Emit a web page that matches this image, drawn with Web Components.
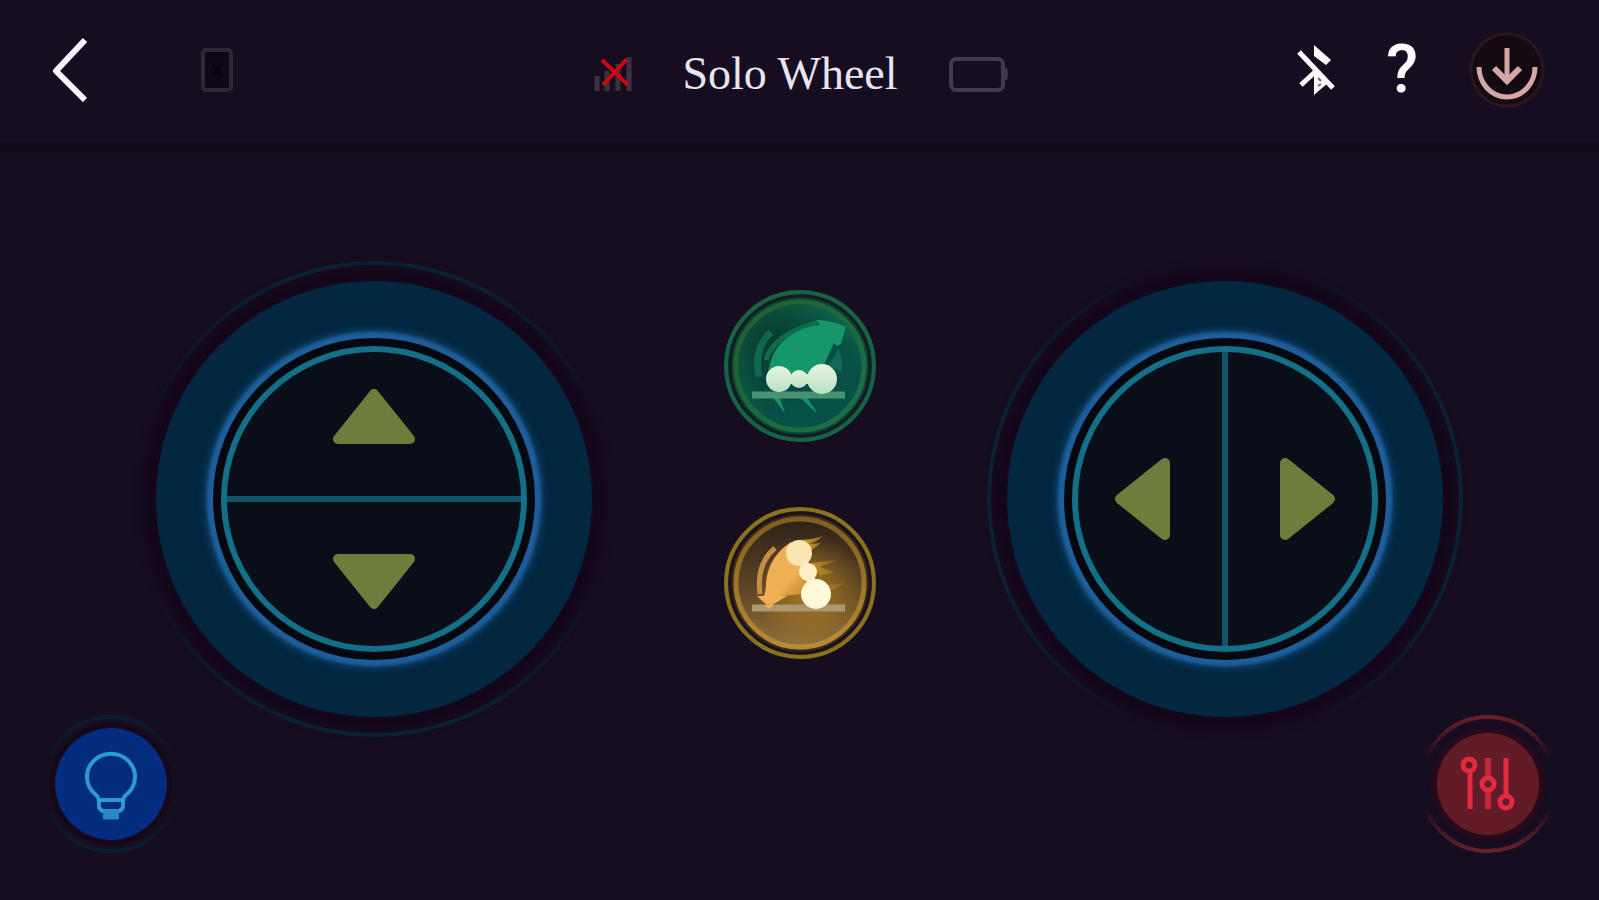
<!DOCTYPE html>
<html lang="en">
<head>
<meta charset="UTF-8">
<meta name="viewport" content="width=device-width, initial-scale=1">
<title>Solo Wheel</title>
<style>
    body {
        margin: 0;
        background: #160e20;
        font-family: "Liberation Serif", "Times New Roman", serif;
    }
</style>
</head>
<body>
<wheel-remote>
    <wheel-header slot="header">Solo Wheel</wheel-header>
    <round-button slot="light" kind="light"></round-button>
    <wheel-dial slot="drive" axis="vertical"></wheel-dial>
    <mode-button slot="modes" mode="eco"></mode-button>
    <mode-button slot="modes" mode="sport"></mode-button>
    <wheel-dial slot="steer" axis="horizontal"></wheel-dial>
    <round-button slot="settings" kind="settings"></round-button>
</wheel-remote>

<script>
const BUTTON_RESET = `
    * { box-sizing: border-box; }
    svg { display: block; }
    button {
        margin: 0;
        padding: 0;
        border: 0;
        background: none;
        color: inherit;
        cursor: pointer;
    }
`;

// Page frame: the two corner buttons share the grid cells of the dials
class WheelRemote extends HTMLElement {
    connectedCallback() {
        this.attachShadow({ mode: 'open' });
        this.shadowRoot.innerHTML = `
            <style>
                :host {
                    display: flex;
                    flex-direction: column;
                    min-height: 100vh;
                }

                main {
                    flex: 1;
                    display: grid;
                    grid-template-columns: 1fr auto 1fr;
                    align-items: center;
                    justify-items: center;
                    padding: 0 26px 46px;
                }

                slot[name="drive"]::slotted(*) { grid-area: 1 / 1; }
                slot[name="steer"]::slotted(*) { grid-area: 1 / 3; }

                slot[name="light"]::slotted(*) {
                    grid-area: 1 / 1;
                    place-self: end start;
                    margin-left: 15px;
                    z-index: 1;
                }

                slot[name="settings"]::slotted(*) {
                    grid-area: 1 / 3;
                    place-self: end end;
                    margin-right: 15px;
                    z-index: 1;
                }

                .modes {
                    grid-area: 1 / 2;
                    display: flex;
                    flex-direction: column;
                    gap: 63px;
                    padding-bottom: 48px;
                }
            </style>
            <slot name="header"></slot>
            <main>
                <slot name="drive"></slot>
                <div class="modes"><slot name="modes"></slot></div>
                <slot name="steer"></slot>
                <slot name="light"></slot>
                <slot name="settings"></slot>
            </main>
        `;
    }
}

class WheelHeader extends HTMLElement {
    connectedCallback() {
        this.attachShadow({ mode: 'open' });
        this.shadowRoot.innerHTML = `
            <style>
                ${BUTTON_RESET}

                :host { display: block; }

                header {
                    display: grid;
                    grid-template-columns: 1fr auto 1fr;
                    align-items: center;
                    height: 143px;
                    padding: 0 54px 3px 51px;
                    box-sizing: border-box;
                    box-shadow: 0 7px 3px #120b19;
                }

                .side,
                .status {
                    display: flex;
                    align-items: center;
                }

                .side { gap: 114px; }

                .side.end {
                    justify-content: flex-end;
                    gap: 51px;
                }

                .status {
                    gap: 50px;
                    padding: 7px 0 0 6px;
                }

                h1 {
                    margin: 0;
                    font-size: 46px;
                    line-height: 52px;
                    font-weight: 400;
                    color: #e9e4f2;
                    white-space: nowrap;
                }

                .help {
                    font: 500 66px/66px Roboto, sans-serif;
                    color: #fdfbff;
                }
            </style>
            <header>
                <div class="side">
                    <button aria-label="Back">
                        <svg width="36" height="64" viewBox="0 0 36 64" fill="none" stroke="#f6f3fb" stroke-width="6">
                            <path d="M34 2 5 33l29 29" stroke-linejoin="round"/>
                        </svg>
                    </button>
                    <svg width="32" height="44" viewBox="0 0 32 44">
                        <rect x="2" y="2" width="28" height="40" rx="3" fill="#0f0819" stroke="#2d2737" stroke-width="4"/>
                        <path d="m12 17 8 10m0-10-8 10" stroke="#06030b" stroke-width="3"/>
                    </svg>
                </div>
                <div class="status">
                    <svg width="38" height="38" viewBox="0 0 38 38" fill="none">
                        <path d="M3 21v15M13 16v20M24 9v27M35 2v34" stroke="#38333d" stroke-width="5"/>
                        <path d="M8 5 34 30M33 4 9 30" stroke="#cb0710" stroke-width="4"/>
                    </svg>
                    <h1><slot></slot></h1>
                    <svg width="60" height="36" viewBox="0 0 60 36" fill="none" stroke="#423a4c">
                        <rect x="3" y="3" width="52" height="31" rx="5" stroke-width="4"/>
                        <path d="M57 12q3 6 0 12" stroke-width="3"/>
                    </svg>
                </div>
                <div class="side end">
                    <button aria-label="Bluetooth disconnected">
                        <svg width="38" height="50" viewBox="0 0 38 50" fill="none" stroke="#fdfbff" stroke-width="5">
                            <path d="m2 7 34 36M4 40l15-14"/>
                            <path d="M17 0 34 15l-5 5-12-9zM17 24l15 13-15 13z" fill="#fdfbff" stroke="none"/>
                            <path d="m21 33 3 3m-3 5 3-2" stroke="#6d6777" stroke-width="2"/>
                        </svg>
                    </button>
                    <button class="help" aria-label="Help">?</button>
                    <button aria-label="Download">
                        <svg width="76" height="78" viewBox="0 0 76 78" fill="none" stroke="#d2a7a6" stroke-width="5">
                            <circle cx="38" cy="39" r="36" fill="#140a11" stroke="#2b151e" stroke-width="3"/>
                            <path d="M10 36a28 30 0 0 0 56 0M38 17v33"/>
                            <path d="m25 37 13 13 13-13" stroke-width="6"/>
                        </svg>
                    </button>
                </div>
            </header>
        `;
    }
}

class WheelDial extends HTMLElement {
    connectedCallback() {
        const vertical = this.getAttribute('axis') === 'vertical';
        const labels = vertical ? ['Forward', 'Backward'] : ['Left', 'Right'];
        const turns = vertical ? [0, 180] : [270, 90];
        const arrow = (deg) => `
            <svg width="84" height="84" viewBox="0 0 84 84">
                <path d="M42 19 6 64h72z" transform="rotate(${deg} 42 42)"/>
            </svg>`;

        this.attachShadow({ mode: 'open' });
        this.shadowRoot.innerHTML = `
            <style>
                ${BUTTON_RESET}

                :host {
                    display: grid;
                    place-items: center;
                    position: relative;
                    width: 436px;
                    height: 436px;
                    border-radius: 50%;
                    background: #02273f;
                    box-shadow: 0 0 10px 14px #15071b;
                }

                /* faint outer ring, fades away from the axis */
                :host::before {
                    content: "";
                    position: absolute;
                    inset: -20px;
                    border: 4px solid #0a2035;
                    border-radius: 50%;
                    -webkit-mask: linear-gradient(${vertical ? '180deg' : '90deg'}, #000 4%, transparent 32%, transparent 68%, #000 96%);
                    mask: linear-gradient(${vertical ? '180deg' : '90deg'}, #000 4%, transparent 32%, transparent 68%, #000 96%);
                }

                .face {
                    display: flex;
                    flex-direction: ${vertical ? 'column' : 'row'};
                    gap: 6px;
                    width: 306px;
                    height: 306px;
                    border: 6px solid #137087;
                    border-radius: 50%;
                    background: #115469;
                    overflow: hidden;
                    box-shadow: 0 0 0 8px #05080f, 0 0 3px 14px #1d5e9b, 0 0 8px 15px #164f80;
                }

                button {
                    flex: 1;
                    display: grid;
                    place-items: center;
                    background: #090e19;
                }

                button:first-child { padding: ${vertical ? '0 0 14px' : '0 14px 0 0'}; }
                button:last-child { padding: ${vertical ? '14px 0 0' : '0 0 0 14px'}; }

                path {
                    fill: #6d7d3c;
                    stroke: #6d7d3c;
                    stroke-width: 10px;
                    stroke-linejoin: round;
                }
            </style>
            <div class="face">
                <button aria-label="${labels[0]}">${arrow(turns[0])}</button>
                <button aria-label="${labels[1]}">${arrow(turns[1])}</button>
            </div>
        `;
    }
}

const MODES = {
    eco: {
        label: 'Eco mode',
        art: `
            <defs>
                <radialGradient id="bg" cx="58%" cy="65%" r="65%">
                    <stop offset="0" stop-color="#07504a"/>
                    <stop offset="60%" stop-color="#075044"/>
                    <stop offset="100%" stop-color="#126b50"/>
                </radialGradient>
                <radialGradient id="shade" cx="26%" cy="30%" r="60%">
                    <stop offset="0" stop-color="#063c2e"/>
                    <stop offset="1" stop-color="#063c2e" stop-opacity="0"/>
                </radialGradient>
                <linearGradient id="ball" x2="0" y2="1">
                    <stop offset="0" stop-color="#e9f5e2"/>
                    <stop offset="1" stop-color="#b9dfc4"/>
                </linearGradient>
                <linearGradient id="rim" x2="1" y2="1">
                    <stop offset="0" stop-color="#225f2c"/>
                    <stop offset="1" stop-color="#17734f"/>
                </linearGradient>
            </defs>
            <circle cx="77" cy="77" r="74" fill="#0d4333" stroke="#166345" stroke-width="4"/>
            <circle cx="77" cy="77" r="70" fill="none" stroke="#141c22" stroke-width="3"/>
            <circle cx="77" cy="77" r="64" fill="url(#bg)" stroke="url(#rim)" stroke-width="5"/>
            <circle cx="77" cy="77" r="62" fill="url(#shade)"/>
            <path d="M36 88Q30 60 48 43" fill="none" stroke="#11664f" stroke-width="7"/>
            <path d="M43 71Q51 45 94 34" fill="none" stroke="#0f6c4d" stroke-width="5"/>
            <path d="M45 87Q47 61 64 49 77 38 97 36L93 31q16 0 30 7l-5 17-4 2-3-3q-6 13-14 31z" fill="#15976b"/>
            <path d="M104 76q9-8 11-17l4 10v15z" fill="#116854"/>
            <path d="m50 108 11 14-5-14M76 107l17 16-11-17" fill="#12956b" stroke="#12956b"/>
            <path d="M29 106h93" stroke="#479272" stroke-width="7"/>
            <path d="M56 90h43" stroke="#c7e7cd" stroke-width="10"/>
            <g fill="url(#ball)">
                <circle cx="56" cy="90" r="13"/>
                <circle cx="76" cy="90" r="9"/>
                <circle cx="99" cy="90" r="15"/>
            </g>`
    },
    sport: {
        label: 'Sport mode',
        art: `
            <defs>
                <linearGradient id="bg" x2="0" y2="1">
                    <stop offset="0" stop-color="#2d2119"/>
                    <stop offset="55%" stop-color="#604525"/>
                    <stop offset="100%" stop-color="#92723a"/>
                </linearGradient>
                <radialGradient id="glow" cx="58%" cy="56%" r="44%">
                    <stop offset="0" stop-color="#a7791e"/>
                    <stop offset="1" stop-color="#a7791e" stop-opacity="0"/>
                </radialGradient>
                <linearGradient id="trail">
                    <stop offset="0" stop-color="#d9a535"/>
                    <stop offset="1" stop-color="#a57620" stop-opacity="0.3"/>
                </linearGradient>
                <linearGradient id="wing" x2="1" y2="1">
                    <stop offset="60%" stop-color="#f0b055"/>
                    <stop offset="1" stop-color="#e0a03f" stop-opacity="0.4"/>
                </linearGradient>
                <linearGradient id="rim" x2="0" y2="1">
                    <stop offset="0" stop-color="#805e1b"/>
                    <stop offset="1" stop-color="#b98b37"/>
                </linearGradient>
            </defs>
            <circle cx="77" cy="77" r="74" fill="#3b2a1a" stroke="#8b721c" stroke-width="4"/>
            <circle cx="77" cy="77" r="70" fill="none" stroke="#1b1220" stroke-width="3"/>
            <circle cx="77" cy="77" r="64" fill="url(#bg)" stroke="url(#rim)" stroke-width="5"/>
            <circle cx="77" cy="77" r="62" fill="url(#glow)"/>
            <path d="M76 34q12 0 24-4-5 5-14 8l12-1-12 9zM88 57l26-3-17 7 14 5-14 4zM97 77q14 4 26-1-9 7-20 9z" fill="url(#trail)"/>
            <path d="M37 88Q33 58 52 42" fill="none" stroke="#c58e43" stroke-width="5"/>
            <path d="M43 90Q40 54 68 36l15 25q6 16 7 26l-31 3z" fill="url(#wing)"/>
            <path d="m46 101-12-11h7q2-6 3-16l12-2v18h8z" fill="#f0b055"/>
            <path d="M29 102h93" stroke="#ad9871" stroke-width="7"/>
            <path d="m76 47 9 19 8 22" fill="none" stroke="#fff0c3" stroke-width="9"/>
            <g>
                <circle cx="76" cy="47" r="13" fill="#fce7b4"/>
                <circle cx="85" cy="66" r="9" fill="#fff0c4"/>
                <circle cx="93" cy="88" r="15" fill="#fff9d9"/>
            </g>
            <path d="m41 99 5 4 5-4z" fill="#f0b055"/>`
    }
};

class ModeButton extends HTMLElement {
    connectedCallback() {
        const mode = MODES[this.getAttribute('mode')];
        this.attachShadow({ mode: 'open' });
        this.shadowRoot.innerHTML = `
            <style>
                ${BUTTON_RESET}
                :host { display: block; }
                button { display: block; border-radius: 50%; }
            </style>
            <button aria-label="${mode.label}">
                <svg width="154" height="154" viewBox="0 0 154 154">${mode.art}</svg>
            </button>
        `;
    }
}

const ROUND = {
    light: {
        label: 'Light',
        art: `
            <defs>
                <linearGradient id="ring" x2="0" y2="1">
                    <stop offset="0" stop-color="#0c1c31"/>
                    <stop offset="30%" stop-color="#0c1c31" stop-opacity="0"/>
                    <stop offset="70%" stop-color="#0c1c31" stop-opacity="0"/>
                    <stop offset="1" stop-color="#0c1c31"/>
                </linearGradient>
                <radialGradient id="disc">
                    <stop offset="80%" stop-color="#032b7e"/>
                    <stop offset="97%" stop-color="#052c82"/>
                    <stop offset="1" stop-color="#062769"/>
                </radialGradient>
            </defs>
            <circle cx="70" cy="70" r="61" fill="#14081a"/>
            <circle cx="70" cy="70" r="67" fill="none" stroke="url(#ring)" stroke-width="4"/>
            <circle cx="70" cy="70" r="56" fill="url(#disc)"/>
            <g fill="none" stroke="#2b9bd2" stroke-width="4">
                <path d="M58 87q0-4-4-7a24 23 0 1 1 32 0q-4 3-4 7v6q-1 3-4 4H62q-3-1-4-4zM58 86h24"/>
                <path d="M62 98h16M62 103h16" stroke="#2789c2" stroke-width="5"/>
            </g>`
    },
    settings: {
        label: 'Settings',
        art: `
            <defs>
                <linearGradient id="ring" x2="0" y2="1">
                    <stop offset="0" stop-color="#6d1d2b"/>
                    <stop offset="32%" stop-color="#6d1d2b" stop-opacity="0"/>
                    <stop offset="68%" stop-color="#6d1d2b" stop-opacity="0"/>
                    <stop offset="1" stop-color="#6d1d2b"/>
                </linearGradient>
                <radialGradient id="halo">
                    <stop offset="84%" stop-color="#2e0c19"/>
                    <stop offset="1" stop-color="#140b1d"/>
                </radialGradient>
            </defs>
            <circle cx="70" cy="70" r="60" fill="url(#halo)"/>
            <circle cx="70" cy="70" r="67" fill="none" stroke="url(#ring)" stroke-width="4"/>
            <circle cx="70" cy="70" r="51" fill="#641b28"/>
            <g fill="#641b28" stroke="#e22b3d" stroke-width="5">
                <path d="M52 57v38M88 44v39"/>
                <path d="M70 44v20M70 76v19" stroke="#c02739" stroke-width="6"/>
                <circle cx="51" cy="51" r="6"/>
                <circle cx="70" cy="70" r="6"/>
                <circle cx="88" cy="88" r="6"/>
            </g>`
    }
};

class RoundButton extends HTMLElement {
    connectedCallback() {
        const kind = ROUND[this.getAttribute('kind')];
        this.attachShadow({ mode: 'open' });
        this.shadowRoot.innerHTML = `
            <style>
                ${BUTTON_RESET}
                :host { display: block; }
                button { display: block; border-radius: 50%; }
            </style>
            <button aria-label="${kind.label}">
                <svg width="140" height="140" viewBox="0 0 140 140">${kind.art}</svg>
            </button>
        `;
    }
}

customElements.define('wheel-remote', WheelRemote);
customElements.define('wheel-header', WheelHeader);
customElements.define('wheel-dial', WheelDial);
customElements.define('mode-button', ModeButton);
customElements.define('round-button', RoundButton);
</script>
</body>
</html>
